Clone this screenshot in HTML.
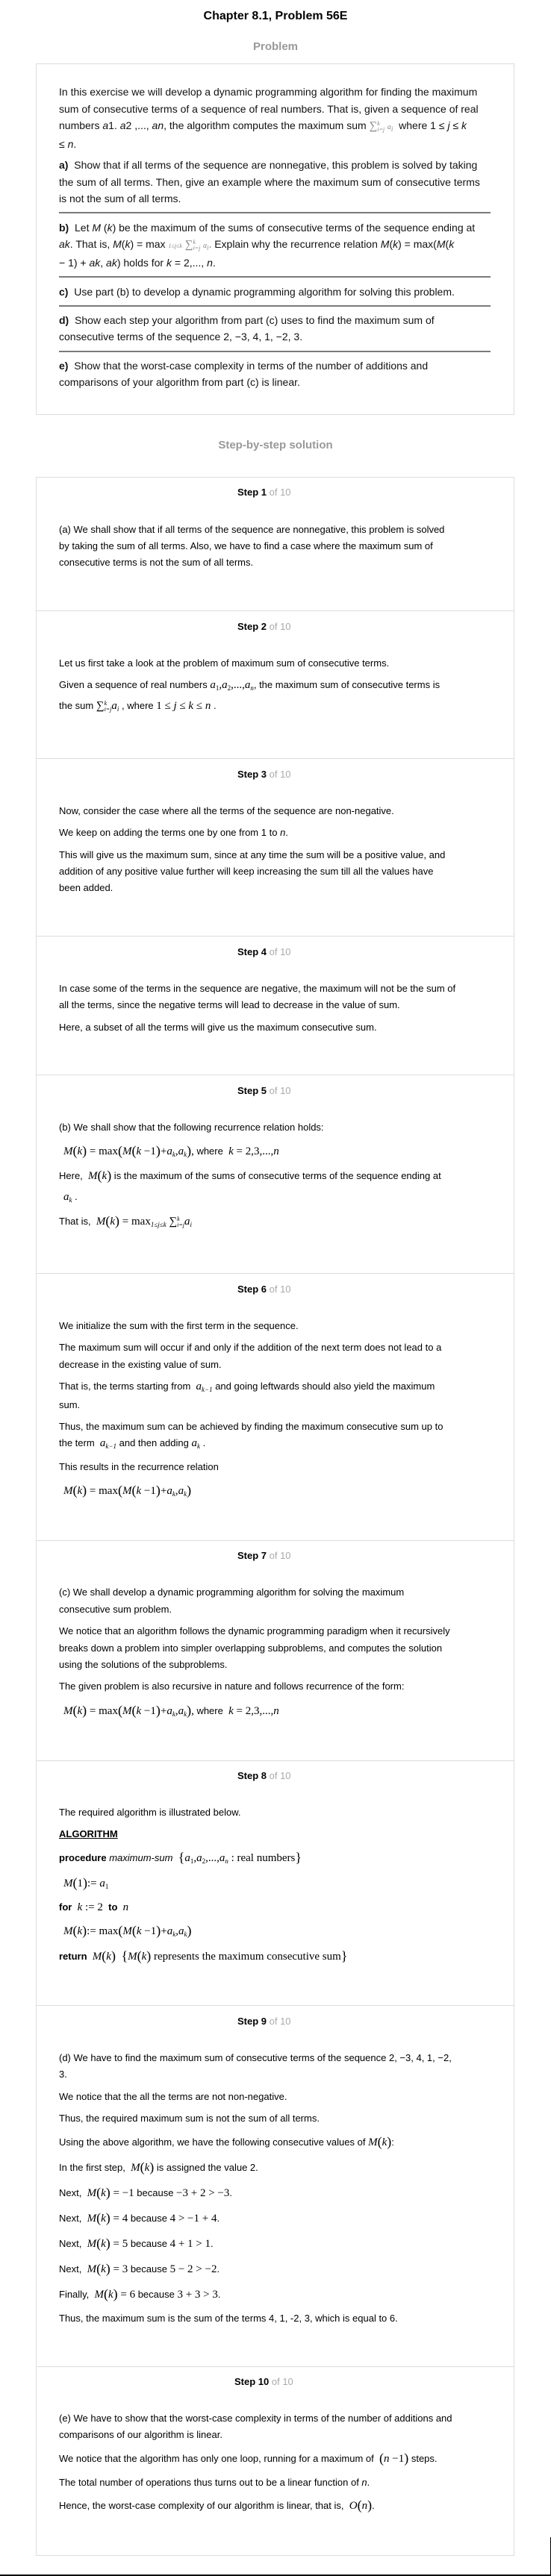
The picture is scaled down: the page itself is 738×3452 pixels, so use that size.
<!DOCTYPE html>
<html><head><meta charset="utf-8">
<style>
*{margin:0;padding:0;box-sizing:border-box}
html,body{width:738px;height:3452px;background:#fff;overflow:hidden}
body{position:relative;font-family:"Liberation Sans",Arial,sans-serif;color:#000}
.c{position:absolute;left:0;width:738px;text-align:center;font-weight:bold;white-space:nowrap}
.l{position:absolute;left:79px;white-space:nowrap;font-size:13px;line-height:22px;height:22px}
.p{font-size:14px;color:#111}
.hr{position:absolute;left:79px;width:578px;height:2px;background:#7a7a7a}
.box{position:absolute;left:48px;width:641px;border:1px solid #dcdcdc}
.dv{position:absolute;left:48px;width:641px;height:1px;background:#dcdcdc}
.sh{position:absolute;left:318px;white-space:nowrap;font-size:13px;font-weight:bold;line-height:22px}
.sh span{color:#aaa;font-weight:normal}
.m{font-family:"Liberation Serif",serif;font-size:15px}
.m sub{font-size:9px;vertical-align:-3px}
.m sup{font-size:9px}
.pa{font-size:18px;vertical-align:-1px}
.lim{display:inline-block;vertical-align:middle;font-size:8px;line-height:8px;font-style:italic;text-align:left}
.gr{color:#888}
</style></head><body>

<div class="c" style="top:12px;font-size:16px;line-height:20px">Chapter 8.1, Problem 56E</div>
<div class="c" style="top:53px;font-size:15px;line-height:20px;color:#999">Problem</div>

<div class="box" style="top:85px;height:471px"></div>
<div class="l p" style="top:112px">In this exercise we will develop a dynamic programming algorithm for finding the maximum</div>
<div class="l p" style="top:135px">sum of consecutive terms of a sequence of real numbers. That is, given a sequence of real</div>
<div class="l p" style="top:157px">numbers <i>a</i>1. <i>a</i>2 ,..., <i>an</i>, the algorithm computes the maximum sum <span class="m gr">∑<span class="lim">k<br>i=j</span> <i style="font-size:10px">a<sub>i</sub></i></span> &nbsp;where 1 ≤ <i>j</i> ≤ <i>k</i></div>
<div class="l p" style="top:182px">≤ <i>n</i>.</div>
<div class="l p" style="top:210px"><b>a)</b>&nbsp; Show that if all terms of the sequence are nonnegative, this problem is solved by taking</div>
<div class="l p" style="top:233px">the sum of all terms. Then, give an example where the maximum sum of consecutive terms</div>
<div class="l p" style="top:255px">is not the sum of all terms.</div>
<div class="hr" style="top:284px"></div>
<div class="l p" style="top:294px"><b>b)</b>&nbsp; Let <i>M</i> (<i>k</i>) be the maximum of the sums of consecutive terms of the sequence ending at</div>
<div class="l p" style="top:316px"><i>ak</i>. That is, <i>M</i>(<i>k</i>) = max <span class="m gr"><span style="font-size:8px;font-style:italic">1≤j≤k</span> ∑<span class="lim">k<br>i=j</span> <i style="font-size:10px">a<sub>i</sub></i>.</span> Explain why the recurrence relation <i>M</i>(<i>k</i>) = max(<i>M</i>(<i>k</i></div>
<div class="l p" style="top:341px">− 1) + <i>ak</i>, <i>ak</i>) holds for <i>k</i> = 2,..., <i>n</i>.</div>
<div class="hr" style="top:370px"></div>
<div class="l p" style="top:380px"><b>c)</b>&nbsp; Use part (b) to develop a dynamic programming algorithm for solving this problem.</div>
<div class="hr" style="top:409px"></div>
<div class="l p" style="top:418px"><b>d)</b>&nbsp; Show each step your algorithm from part (c) uses to find the maximum sum of</div>
<div class="l p" style="top:440px">consecutive terms of the sequence 2, −3, 4, 1, −2, 3.</div>
<div class="hr" style="top:470px"></div>
<div class="l p" style="top:479px"><b>e)</b>&nbsp; Show that the worst-case complexity in terms of the number of additions and</div>
<div class="l p" style="top:501px">comparisons of your algorithm from part (c) is linear.</div>

<div class="c" style="top:587px;font-size:15px;line-height:20px;color:#999">Step-by-step solution</div>

<div class="box" style="top:639px;height:2786px"></div>
<div class="dv" style="top:818px"></div>
<div class="dv" style="top:1016px"></div>
<div class="dv" style="top:1254px"></div>
<div class="dv" style="top:1440px"></div>
<div class="dv" style="top:1706px"></div>
<div class="dv" style="top:2064px"></div>
<div class="dv" style="top:2359px"></div>
<div class="dv" style="top:2687px"></div>
<div class="dv" style="top:3171px"></div>

<div class="sh" style="top:649px">Step 1 <span>of 10</span></div>
<div class="l" style="top:699px">(a) We shall show that if all terms of the sequence are nonnegative, this problem is solved</div>
<div class="l" style="top:721px">by taking the sum of all terms. Also, we have to find a case where the maximum sum of</div>
<div class="l" style="top:743px">consecutive terms is not the sum of all terms.</div>

<div class="sh" style="top:829px">Step 2 <span>of 10</span></div>
<div class="l" style="top:878px">Let us first take a look at the problem of maximum sum of consecutive terms.</div>
<div class="l" style="top:907px">Given a sequence of real numbers <span class="m"><i>a</i><sub>1</sub>,<i>a</i><sub>2</sub>,...,<i>a<sub>n</sub></i></span>, the maximum sum of consecutive terms is</div>
<div class="l" style="top:935px">the sum <span class="m">∑<span class="lim">k<br>i=j</span><i>a<sub>i</sub></i></span> , where <span class="m">1 ≤ <i>j</i> ≤ <i>k</i> ≤ <i>n</i></span> .</div>

<div class="sh" style="top:1027px">Step 3 <span>of 10</span></div>
<div class="l" style="top:1076px">Now, consider the case where all the terms of the sequence are non-negative.</div>
<div class="l" style="top:1105px">We keep on adding the terms one by one from 1 to <i>n</i>.</div>
<div class="l" style="top:1135px">This will give us the maximum sum, since at any time the sum will be a positive value, and</div>
<div class="l" style="top:1157px">addition of any positive value further will keep increasing the sum till all the values have</div>
<div class="l" style="top:1179px">been added.</div>

<div class="sh" style="top:1265px">Step 4 <span>of 10</span></div>
<div class="l" style="top:1314px">In case some of the terms in the sequence are negative, the maximum will not be the sum of</div>
<div class="l" style="top:1336px">all the terms, since the negative terms will lead to decrease in the value of sum.</div>
<div class="l" style="top:1366px">Here, a subset of all the terms will give us the maximum consecutive sum.</div>

<div class="sh" style="top:1451px">Step 5 <span>of 10</span></div>
<div class="l" style="top:1500px">(b) We shall show that the following recurrence relation holds:</div>
<div class="l" style="top:1531px;left:85px"><span class="m"><i>M</i><span class="pa">(</span><i>k</i><span class="pa">)</span> = max<span class="pa">(</span><i>M</i><span class="pa">(</span><i>k</i> −1<span class="pa">)</span>+<i>a<sub>k</sub></i>,<i>a<sub>k</sub></i><span class="pa">)</span>,</span> where &nbsp;<span class="m"><i>k</i> = 2,3,...,<i>n</i></span></div>
<div class="l" style="top:1564px">Here, &nbsp;<span class="m"><i>M</i><span class="pa">(</span><i>k</i><span class="pa">)</span></span> is the maximum of the sums of consecutive terms of the sequence ending at</div>
<div class="l" style="top:1593px;left:85px"><span class="m"><i>a<sub>k</sub></i></span> .</div>
<div class="l" style="top:1625px">That is, &nbsp;<span class="m"><i>M</i><span class="pa">(</span><i>k</i><span class="pa">)</span> = max<sub><i>1≤j≤k</i></sub> ∑<span class="lim">k<br>i=j</span><i>a<sub>i</sub></i></span></div>

<div class="sh" style="top:1717px">Step 6 <span>of 10</span></div>
<div class="l" style="top:1766px">We initialize the sum with the first term in the sequence.</div>
<div class="l" style="top:1795px">The maximum sum will occur if and only if the addition of the next term does not lead to a</div>
<div class="l" style="top:1818px">decrease in the existing value of sum.</div>
<div class="l" style="top:1847px">That is, the terms starting from &nbsp;<span class="m"><i>a<sub>k−1</sub></i></span> and going leftwards should also yield the maximum</div>
<div class="l" style="top:1872px">sum.</div>
<div class="l" style="top:1901px">Thus, the maximum sum can be achieved by finding the maximum consecutive sum up to</div>
<div class="l" style="top:1923px">the term &nbsp;<span class="m"><i>a<sub>k−1</sub></i></span> and then adding <span class="m"><i>a<sub>k</sub></i></span> .</div>
<div class="l" style="top:1955px">This results in the recurrence relation</div>
<div class="l" style="top:1986px;left:85px"><span class="m"><i>M</i><span class="pa">(</span><i>k</i><span class="pa">)</span> = max<span class="pa">(</span><i>M</i><span class="pa">(</span><i>k</i> −1<span class="pa">)</span>+<i>a<sub>k</sub></i>,<i>a<sub>k</sub></i><span class="pa">)</span></span></div>

<div class="sh" style="top:2074px">Step 7 <span>of 10</span></div>
<div class="l" style="top:2123px">(c) We shall develop a dynamic programming algorithm for solving the maximum</div>
<div class="l" style="top:2146px">consecutive sum problem.</div>
<div class="l" style="top:2175px">We notice that an algorithm follows the dynamic programming paradigm when it recursively</div>
<div class="l" style="top:2198px">breaks down a problem into simpler overlapping subproblems, and computes the solution</div>
<div class="l" style="top:2220px">using the solutions of the subproblems.</div>
<div class="l" style="top:2249px">The given problem is also recursive in nature and follows recurrence of the form:</div>
<div class="l" style="top:2281px;left:85px"><span class="m"><i>M</i><span class="pa">(</span><i>k</i><span class="pa">)</span> = max<span class="pa">(</span><i>M</i><span class="pa">(</span><i>k</i> −1<span class="pa">)</span>+<i>a<sub>k</sub></i>,<i>a<sub>k</sub></i><span class="pa">)</span>,</span> where &nbsp;<span class="m"><i>k</i> = 2,3,...,<i>n</i></span></div>

<div class="sh" style="top:2369px">Step 8 <span>of 10</span></div>
<div class="l" style="top:2418px">The required algorithm is illustrated below.</div>
<div class="l" style="top:2447px"><b><u>ALGORITHM</u></b></div>
<div class="l" style="top:2478px"><b>procedure</b> <i>maximum-sum</i> &nbsp;<span class="m"><span class="pa">{</span><i>a</i><sub>1</sub>,<i>a</i><sub>2</sub>,...,<i>a<sub>n</sub></i> : real numbers<span class="pa">}</span></span></div>
<div class="l" style="top:2512px;left:85px"><span class="m"><i>M</i><span class="pa">(</span>1<span class="pa">)</span>:= <i>a</i><sub>1</sub></span></div>
<div class="l" style="top:2545px"><b>for</b> &nbsp;<span class="m"><i>k</i> := 2</span> &nbsp;<b>to</b> &nbsp;<span class="m"><i>n</i></span></div>
<div class="l" style="top:2576px;left:85px"><span class="m"><i>M</i><span class="pa">(</span><i>k</i><span class="pa">)</span>:= max<span class="pa">(</span><i>M</i><span class="pa">(</span><i>k</i> −1<span class="pa">)</span>+<i>a<sub>k</sub></i>,<i>a<sub>k</sub></i><span class="pa">)</span></span></div>
<div class="l" style="top:2610px"><b>return</b> &nbsp;<span class="m"><i>M</i><span class="pa">(</span><i>k</i><span class="pa">)</span> &nbsp;<span class="pa">{</span><i>M</i><span class="pa">(</span><i>k</i><span class="pa">)</span> represents the maximum consecutive sum<span class="pa">}</span></span></div>

<div class="sh" style="top:2698px">Step 9 <span>of 10</span></div>
<div class="l" style="top:2747px">(d) We have to find the maximum sum of consecutive terms of the sequence 2, −3, 4, 1, −2,</div>
<div class="l" style="top:2769px">3.</div>
<div class="l" style="top:2799px">We notice that the all the terms are not non-negative.</div>
<div class="l" style="top:2828px">Thus, the required maximum sum is not the sum of all terms.</div>
<div class="l" style="top:2859px">Using the above algorithm, we have the following consecutive values of <span class="m"><i>M</i><span class="pa">(</span><i>k</i><span class="pa">)</span></span>:</div>
<div class="l" style="top:2893px">In the first step, &nbsp;<span class="m"><i>M</i><span class="pa">(</span><i>k</i><span class="pa">)</span></span> is assigned the value 2.</div>
<div class="l" style="top:2927px">Next, &nbsp;<span class="m"><i>M</i><span class="pa">(</span><i>k</i><span class="pa">)</span> = −1</span> because <span class="m">−3 + 2 &gt; −3</span>.</div>
<div class="l" style="top:2961px">Next, &nbsp;<span class="m"><i>M</i><span class="pa">(</span><i>k</i><span class="pa">)</span> = 4</span> because <span class="m">4 &gt; −1 + 4</span>.</div>
<div class="l" style="top:2995px">Next, &nbsp;<span class="m"><i>M</i><span class="pa">(</span><i>k</i><span class="pa">)</span> = 5</span> because <span class="m">4 + 1 &gt; 1</span>.</div>
<div class="l" style="top:3029px">Next, &nbsp;<span class="m"><i>M</i><span class="pa">(</span><i>k</i><span class="pa">)</span> = 3</span> because <span class="m">5 − 2 &gt; −2</span>.</div>
<div class="l" style="top:3063px">Finally, &nbsp;<span class="m"><i>M</i><span class="pa">(</span><i>k</i><span class="pa">)</span> = 6</span> because <span class="m">3 + 3 &gt; 3</span>.</div>
<div class="l" style="top:3096px">Thus, the maximum sum is the sum of the terms 4, 1, -2, 3, which is equal to 6.</div>

<div class="sh" style="top:3181px;left:314px">Step 10 <span>of 10</span></div>
<div class="l" style="top:3230px">(e) We have to show that the worst-case complexity in terms of the number of additions and</div>
<div class="l" style="top:3252px">comparisons of our algorithm is linear.</div>
<div class="l" style="top:3283px">We notice that the algorithm has only one loop, running for a maximum of &nbsp;<span class="m"><span class="pa">(</span><i>n</i> −1<span class="pa">)</span></span> steps.</div>
<div class="l" style="top:3316px">The total number of operations thus turns out to be a linear function of <i>n</i>.</div>
<div class="l" style="top:3346px">Hence, the worst-case complexity of our algorithm is linear, that is, &nbsp;<span class="m"><i>O</i><span class="pa">(</span><i>n</i><span class="pa">)</span></span>.</div>

<div style="position:absolute;left:0;top:3450px;width:738px;height:2px;background:#000"></div>
<div style="position:absolute;left:737px;top:3400px;width:1px;height:52px;background:#000"></div>
</body></html>
